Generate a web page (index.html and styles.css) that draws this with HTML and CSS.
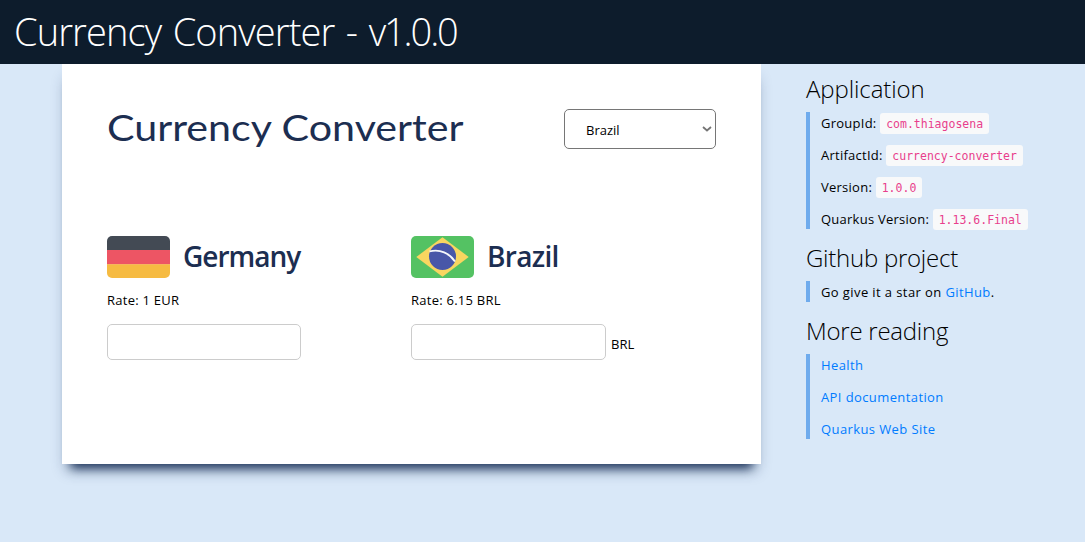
FILE: index.html
```html
<!DOCTYPE html>
<html lang="en">
<head>
<meta charset="utf-8">
<title>Currency Converter - v1.0.0</title>
<link rel="stylesheet" href="styles.css">
</head>
<body>
<header class="banner">Currency Converter - <span class="version">v1.0.0</span></header>
<div class="container">
  <main class="card">
    <div class="card-head">
      <h1 class="title">Currency Converter</h1>
      <div class="select"><span>Brazil</span>
        <svg class="chevron" width="10" height="6" viewBox="0 0 10 6"><path d="M1 1l4 3.500 4-3.500" fill="none" stroke="#757575" stroke-width="1.800"/></svg>
      </div>
    </div>
    <div class="countries">
      <section class="country">
        <div class="country-head">
          <svg class="flag" width="63" height="42" viewBox="0 0 63 42"><path fill="#434a54" d="M0 0h63v14.5H0z"/><path fill="#ed5564" d="M0 14h63v14.500H0z"/><path fill="#f6bb42" d="M0 28.300h63V42H0z"/></svg>
          <h2 class="name germany">Germany</h2>
        </div>
        <p class="rate">Rate: 1 EUR</p>
        <div class="amount"><input class="field" type="text" aria-label="EUR"></div>
      </section>
      <section class="country">
        <div class="country-head">
          <svg class="flag" width="63" height="42" viewBox="0 0 63 42"><path fill="#54c263" d="M0 0h63v42H0z"/><path fill="#f8d660" d="M5.300 21L31.500 1.200 57.700 21 31.500 40.800z"/><circle cx="31.500" cy="20.500" r="13.500" fill="#4857a8"/><path d="M18.500 15.400c10.500-2.500 20 1.500 25.500 10.200" fill="none" stroke="#f5f7fa" stroke-width="1.900"/></svg>
          <h2 class="name brazil">Brazil</h2>
        </div>
        <p class="rate">Rate: 6.15 BRL</p>
        <div class="amount"><input class="field second" type="text" aria-label="BRL"><span>BRL</span></div>
      </section>
    </div>
  </main>
  <aside class="side">
    <h3 class="side-title application">Application</h3>
    <ul class="list">
      <li>GroupId: <code>com.thiagosena</code></li>
      <li>ArtifactId: <code>currency-converter</code></li>
      <li>Version: <code>1.0.0</code></li>
      <li>Quarkus Version: <code>1.13.6.Final</code></li>
    </ul>
    <h3 class="side-title">Github project</h3>
    <ul class="list links"><li>Go give it a star on <a href="#">GitHub</a>.</li></ul>
    <h3 class="side-title">More reading</h3>
    <ul class="list links">
      <li><a href="#">Health</a></li>
      <li><a href="#">API documentation</a></li>
      <li><a href="#">Quarkus Web Site</a></li>
    </ul>
  </aside>
</div>
</body>
</html>
```

FILE: styles.css
```css
* { box-sizing: border-box; }
body { margin: 0; min-height: 542px; background: #d9e8f8; color: #000; font: 13px/21px "Open Sans", "Noto Sans", sans-serif; }
h1, h2, h3, p, ul { margin: 0; padding: 0; }
.banner { height: 64px; padding-left: 14px; background: #0d1c2c; color: #fff; font-size: 38px; font-weight: 300; line-height: 63px; letter-spacing: -0.9px; word-spacing: 2.5px; white-space: nowrap; }
.version { letter-spacing: -2.1px; }
.container { display: flex; padding-left: 62px; }
.card { width: 699px; height: 400px; padding: 45px; background: #fff; box-shadow: 0 13px 10px -9px #1c335a, 0 10px 14px -4px rgba(28, 51, 90, 0.32); clip-path: inset(0 -30px -40px -30px); }
.card-head { display: flex; justify-content: space-between; height: 127px; }
.title { color: #1c2e51; font: 400 36px/36px Lato, sans-serif; transform: scaleX(1.145); transform-origin: left; white-space: nowrap; height: 36px; }
.select { display: flex; align-items: center; justify-content: space-between; width: 152px; height: 40px; padding: 2px 3px 0 21px; border: 1px solid #767676; border-radius: 5px; }
.chevron { margin-top: -2px; }
.countries { display: flex; }
.country { width: 304px; }
.country-head { display: flex; align-items: center; gap: 13px; height: 42px; }
.flag { border-radius: 5px; }
.name { padding-bottom: 3px; color: #1c2e51; font-size: 28px; font-weight: 600; line-height: 40px; }
.germany { letter-spacing: -1px; }
.brazil { letter-spacing: -0.7px; }
.rate { margin: 12px 0 13px; letter-spacing: 0.25px; }
.amount { display: flex; align-items: center; gap: 5px; height: 36px; }
.amount span { padding-top: 4px; }
.field { width: 194px; height: 36px; padding: 8px; border: 1px solid #ccc; border-radius: 5px; background: #fff; font: inherit; }
.second { width: 195px; }
.side { padding-left: 45px; letter-spacing: 0.25px; }
.side-title { margin: 14px 0 9px; font-size: 24px; font-weight: 300; line-height: 29px; letter-spacing: -0.25px; }
.application { margin: 10px 0 9px; letter-spacing: -0.1px; }
.list { padding-left: 11px; border-left: 4px solid #6fabed; list-style: none; }
.list li { height: 21px; margin-bottom: 11px; line-height: 23px; white-space: nowrap; }
.list li:last-child { margin-bottom: 0; }
.links { letter-spacing: 0.4px; }
a { color: #007bff; text-decoration: none; }
code { display: inline-block; height: 21px; padding: 0 6px; border-radius: 3px; background: #f8f9fa; color: #e83e8c; font: 11.5px/22px "DejaVu Sans Mono", monospace; letter-spacing: 0; vertical-align: top; margin-top: 1px; }
```
